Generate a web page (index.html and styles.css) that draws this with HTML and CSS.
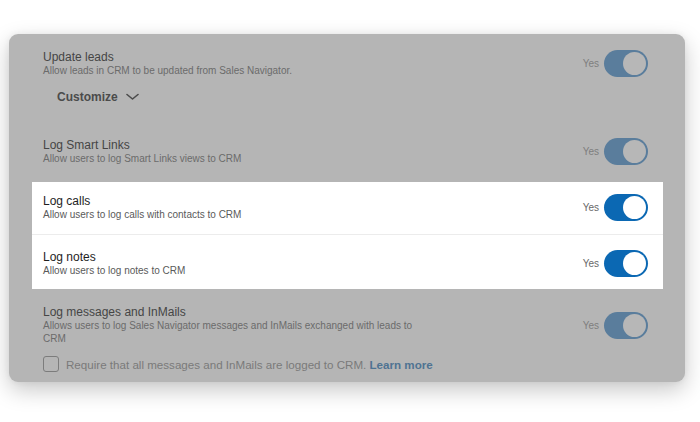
FILE: index.html
```html
<!DOCTYPE html>
<html>
<head>
<meta charset="utf-8">
<link rel="stylesheet" href="styles.css">
</head>
<body>
<div class="card">
  <section class="setting s1">
    <div class="row">
      <div class="text">
        <div class="title">Update leads</div>
        <div class="sub">Allow leads in CRM to be updated from Sales Navigator.</div>
      </div>
      <div class="control"><span class="yes">Yes</span><span class="toggle"><span class="knob"></span></span></div>
    </div>
    <button class="customize">Customize <svg width="13" height="8" viewBox="0 0 13 8"><polyline points="1,1.5 6.5,6 12,1.5" fill="none" stroke="currentColor" stroke-width="1.6" stroke-linecap="round" stroke-linejoin="round"/></svg></button>
  </section>
  <section class="setting s2">
    <div class="row">
      <div class="text">
        <div class="title">Log Smart Links</div>
        <div class="sub">Allow users to log Smart Links views to CRM</div>
      </div>
      <div class="control"><span class="yes">Yes</span><span class="toggle"><span class="knob"></span></span></div>
    </div>
  </section>
  <div class="focus">
    <section class="setting s3">
      <div class="row">
        <div class="text">
          <div class="title">Log calls</div>
          <div class="sub">Allow users to log calls with contacts to CRM</div>
        </div>
        <div class="control"><span class="yes">Yes</span><span class="toggle"><span class="knob"></span></span></div>
      </div>
    </section>
    <section class="setting s4">
      <div class="row">
        <div class="text">
          <div class="title">Log notes</div>
          <div class="sub">Allow users to log notes to CRM</div>
        </div>
        <div class="control"><span class="yes">Yes</span><span class="toggle"><span class="knob"></span></span></div>
      </div>
    </section>
  </div>
  <section class="setting s5">
    <div class="row">
      <div class="text">
        <div class="title">Log messages and InMails</div>
        <div class="sub wrap">Allows users to log Sales Navigator messages and InMails exchanged with leads to CRM</div>
      </div>
      <div class="control"><span class="yes">Yes</span><span class="toggle"><span class="knob"></span></span></div>
    </div>
    <label class="check"><span class="box"></span><span class="check-text">Require that all messages and InMails are logged to CRM. <b class="learn">Learn more</b></span></label>
  </section>
</div>
</body>
</html>
```

FILE: styles.css
```css
* { box-sizing: border-box; }
html, body { margin: 0; padding: 0; background: #fff; }
body {
  font-family: "Liberation Sans", Arial, sans-serif;
  width: 700px;
  height: 422px;
  overflow: hidden;
  padding-top: 34px;
}
.card {
  margin-left: 9px;
  width: 676px;
  height: 348px;
  background: #b5b5b5;
  border-radius: 9px;
  box-shadow: 0 8px 22px rgba(0, 0, 0, 0.22), 0 0 6px rgba(0, 0, 0, 0.06);
  padding: 4px 22px 0 23px;
}
.setting { padding: 12px 15px 13px 11px; }
.row { display: flex; align-items: center; }
.text { flex: 1; }
.title { font-size: 12px; line-height: 14px; color: #454545; }
.sub { font-size: 10px; line-height: 13px; color: #6b6b6b; }
.sub.wrap { max-width: 385px; }
.control { display: flex; align-items: center; gap: 5px; }
.yes { font-size: 10px; color: #7e7e7e; }
.toggle {
  width: 44px;
  height: 27px;
  border-radius: 14px;
  background: #5a7d9c;
  padding: 2px;
  display: flex;
  justify-content: flex-end;
}
.knob {
  width: 23px;
  height: 23px;
  border-radius: 50%;
  background: #b7b7b7;
}
.s1 { padding-bottom: 15px; }
.customize {
  display: flex;
  align-items: center;
  gap: 8px;
  margin: 6px 0 0 14px;
  height: 28px;
  padding: 0;
  border: 0;
  background: transparent;
  font-family: inherit;
  font-size: 12px;
  font-weight: bold;
  color: #4b4b4b;
}
.s2 { margin-bottom: 4px; }
.focus { background: #fff; }
.s3 { border-bottom: 1px solid #ececec; }
.s4 { padding-top: 15px; padding-bottom: 12px; }
.focus .title { color: #1e1e1e; }
.focus .sub { color: #5a5a5a; }
.focus .yes { color: #686868; }
.focus .toggle { background: #0b68b3; }
.focus .knob { background: #fff; }
.s5 { margin-top: 4px; padding-bottom: 10px; }
.check { display: flex; align-items: center; gap: 7px; margin-top: 11px; }
.box {
  width: 16px;
  height: 16px;
  border: 1.5px solid #7c7c7c;
  border-radius: 3px;
}
.check-text { font-size: 11.6px; color: #7a7a7a; }
.learn { color: #4f7392; font-weight: bold; }
```
